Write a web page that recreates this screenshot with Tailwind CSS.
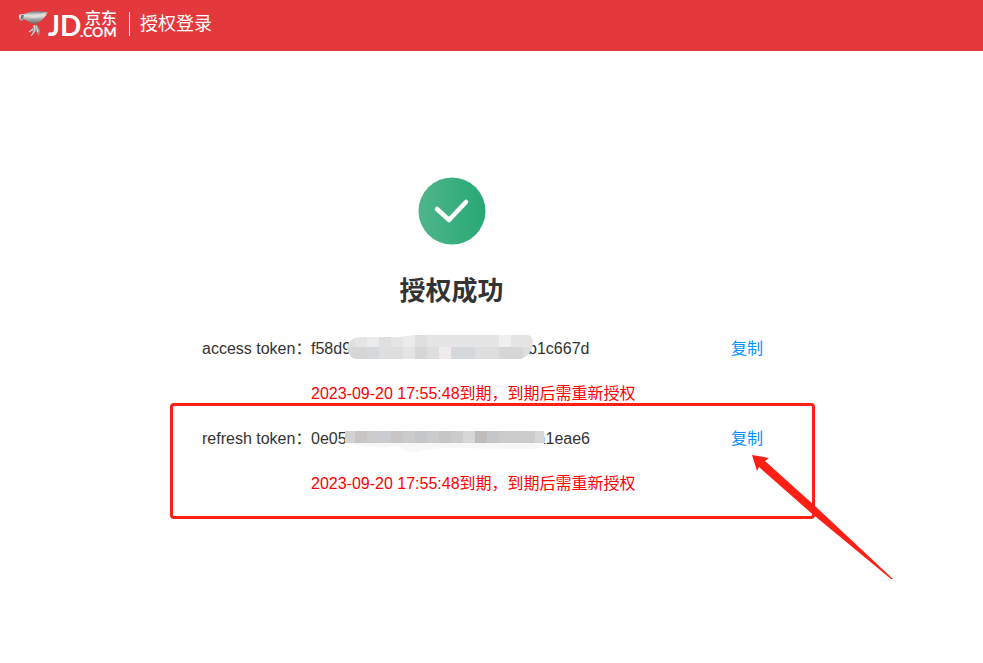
<!DOCTYPE html>
<html lang="zh-CN">
  <head>
    <meta charset="UTF-8" />
    <meta name="viewport" content="width=device-width, initial-scale=1.0" />
    <title>授权登录</title>
    <script src="https://cdn.jsdelivr.net/npm/@tailwindcss/browser@4"></script>
  </head>
  <body class="min-h-screen bg-white text-[#333] font-['Liberation_Sans','Noto_Sans_CJK_SC',sans-serif]">
    <!-- Header -->
    <header class="bg-[#e4393c] h-[51px] pl-[19px] pb-1 flex items-center text-white">
      <a href="#" aria-label="京东 JD.COM">
        <svg class="overflow-visible" width="102" height="36" viewBox="19 6 102 36" fill="#fff">
          <defs>
            <linearGradient id="metal" x1="0" y1="0" x2="0" y2="1">
              <stop offset="0" stop-color="#777" />
              <stop offset="0.35" stop-color="#e4e4e4" />
              <stop offset="0.65" stop-color="#a8a8a8" />
              <stop offset="1" stop-color="#666" />
            </linearGradient>
          </defs>
          <path d="M19 18Q18 14 22 14L24 14Q30 11 37 11L48 12Q45 18 39 22Q36 25 31 23L24 19L22 21Q19 21 19 18Z" fill="url(#metal)" />
          <path d="M24 15Q34 16 47 12Q41 18 33 18Q28 18 24 15Z" fill="#ddd" />
          <path d="M21 15L24 15L23 19L21 19Z" fill="#777" />
          <path d="M34 25L37 25L40 30L39 36L36 31L32 36L33 31L28 32L32 29Z" fill="#999" />
          <path d="M34 25L35 30M36 26L38 32M33 29L29 32M35 30L31 36" stroke="#e2e2e2" fill="none" />
          <text x="48" y="36" font-family="Lato" font-weight="700" font-size="28">JD</text>
          <text x="80" y="37" font-family="Lato" font-weight="700" font-size="14">.COM</text>
          <text x="85" y="24" font-family="Noto Sans CJK SC" font-weight="500" font-size="16">京东</text>
        </svg>
      </a>
      <span class="ml-2 pl-[10px] h-6 flex items-center border-l border-white text-lg">授权登录</span>
    </header>

    <main class="mx-auto mt-[126px] pb-36 max-w-[643px]">
      <!-- Result -->
      <div class="pl-8 pr-28 flex flex-col items-center">
        <svg width="68" height="68" viewBox="0 0 68 68" aria-hidden="true">
          <defs>
            <linearGradient id="green">
              <stop offset="0" stop-color="#50b58c" />
              <stop offset="1" stop-color="#27a874" />
            </linearGradient>
          </defs>
          <circle cx="34" cy="34" r="33.5" fill="url(#green)" />
          <path d="M19 32L31 43L48 25" fill="none" stroke="#fff" stroke-width="4.5" stroke-linecap="round" stroke-linejoin="round" />
        </svg>
        <h1 class="mt-6 text-[26px] leading-11 font-bold">授权成功</h1>
      </div>

      <!-- Access token -->
      <section class="mt-[13px] grid grid-cols-[109px_1fr_auto] pl-8 pr-[50px] leading-[45px]">
        <span class="whitespace-nowrap">access token：</span>
        <span class="flex items-center">
          f58d9
          <svg class="relative z-10 shrink-0 -ml-1 -mr-[5px] mb-[2px]" width="186" height="26" viewBox="347 335 186 26" aria-hidden="true">
            <clipPath id="accessMask">
              <path d="M347 348Q349 338 360 337L400 337L418 335H528Q533 336 533 344Q531 357 520 359H356Q350 359 347 348Z" />
            </clipPath>
            <g clip-path="url(#accessMask)">
              <path d="M343 335h190v12h-190Z" fill="#e5e5e5" />
              <path d="M343 347h190v12h-190Z" fill="#dedede" />
              <path d="M343 335h12v12h-12ZM379 335h12v12h-12ZM415 335h12v12h-12Z" fill="#dfdfdf" />
              <path d="M367 335h12v12h-12ZM403 335h12v12h-12Z" fill="#ebebeb" />
              <path d="M499 335h12v12h-12Z" fill="#f0f0f0" />
              <path d="M343 347h24v12h-24ZM415 347h12v12h-12ZM499 347h24v12h-24Z" fill="#d5d6d5" />
              <path d="M367 347h12v12h-12ZM451 347h24v12h-24Z" fill="#d5d8da" />
              <path d="M439 347h12v12h-12Z" fill="#efebeb" />
              <path d="M403 347h12v12h-12Z" fill="#e4e4e4" />
            </g>
          </svg>
          b1c667d
        </span>
        <button type="button" class="text-[#0091ff] cursor-pointer">复制</button>
        <p class="col-start-2 col-span-2 text-[#f00]">2023-09-20 17:55:48到期，到期后需重新授权</p>
      </section>

      <!-- Refresh token -->
      <section class="relative grid grid-cols-[109px_1fr_auto] pl-8 pr-[50px] leading-[45px]">
        <span class="whitespace-nowrap">refresh token：</span>
        <span class="flex items-center">
          0e05
          <svg class="relative z-10 shrink-0 -ml-[2px] -mr-2 mb-[2px]" width="200" height="30" viewBox="345 423 200 30" aria-hidden="true">
            <path d="M345 442H545Q542 450 530 449L440 448Q424 450 417 452Q408 453 398 446Q375 450 345 443Z" fill="#f7f7f7" />
            <path d="M347 431H544V443H345Q344 436 347 431Z" fill="#cbcbcb" />
            <path d="M345 431h10v12h-10Z" fill="#d1d2d1" />
            <path d="M355 431h12v12h-12ZM391 431h12v12h-12ZM439 431h12v12h-12Z" fill="#c7c6c5" />
            <path d="M379 431h12v12h-12Z" fill="#cbccd1" />
            <path d="M415 431h12v12h-12ZM487 431h12v12h-12Z" fill="#c4c6c9" />
            <path d="M475 431h12v12h-12Z" fill="#c1bcbc" />
            <path d="M463 431h12v12h-12ZM535 431h9v12h-9Z" fill="#d6d7d6" />
          </svg>
          a1eae6
        </span>
        <button type="button" class="text-[#0091ff] cursor-pointer">复制</button>
        <p class="col-start-2 col-span-2 text-[#f00]">2023-09-20 17:55:48到期，到期后需重新授权</p>

        <!-- Highlight box and arrow -->
        <div class="absolute left-0 -right-[2px] -top-[13px] -bottom-[13px] z-20 border-3 border-[#ff2015] rounded-sm pointer-events-none"></div>
        <svg class="absolute z-20 -right-[82px] top-[38px] pointer-events-none" width="144" height="128" viewBox="751 454 144 128" aria-hidden="true">
          <path d="M752 455L769 458L765 461L815 506L893 579L891 579L810 512L759 467L757 471Z" fill="#ff2015" />
        </svg>
      </section>
    </main>
  </body>
</html>
